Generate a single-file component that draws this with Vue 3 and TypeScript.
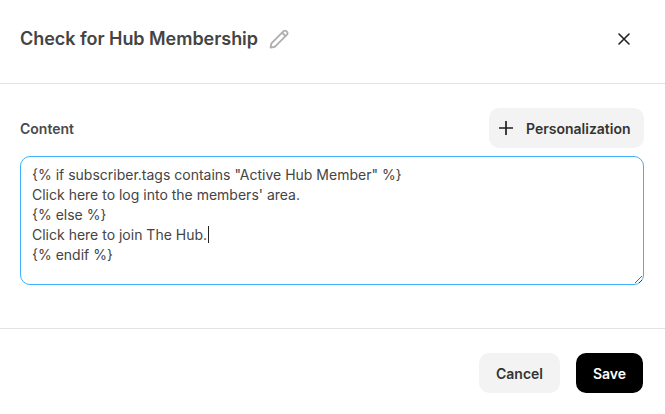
<script setup lang="ts">
const content = `{% if subscriber.tags contains "Active Hub Member" %}
Click here to log into the members' area.
{% else %}
Click here to join The Hub.
{% endif %}`
</script>

<template>
  <div class="modal">
    <header class="head">
      <div class="title-row">
        <h2 class="title">Check for Hub Membership</h2>
        <svg class="pencil" width="20" height="20" viewBox="0 0 20 20" fill="none" stroke="#b0b0b0" stroke-width="1.9" stroke-linejoin="round" stroke-linecap="round">
          <path d="M1.6 18.6 L2.4 14.4 L14.6 2.2 a1.9 1.9 0 0 1 2.7 0 l.7 .7 a1.9 1.9 0 0 1 0 2.7 L5.8 17.8 Z" />
          <path d="M13.2 3.8 L16.4 7" />
        </svg>
      </div>
      <button class="close" aria-label="Close">
        <svg width="12" height="12" viewBox="0 0 12 12" fill="none" stroke="#222" stroke-width="1.6" stroke-linecap="round">
          <path d="M1 1 L11 11 M11 1 L1 11" />
        </svg>
      </button>
    </header>
    <section class="body">
      <div class="label-row">
        <label class="label">Content</label>
        <button class="btn btn-plain personal">
          <svg width="14" height="14" viewBox="0 0 14 14" fill="none" stroke="#1f1f1f" stroke-width="1.7">
            <path d="M7 0 V14 M0 7 H14" />
          </svg>
          <span>Personalization</span>
        </button>
      </div>
      <div class="area-wrap">
        <textarea class="area" readonly :value="content"></textarea>
        <span class="caret"></span>
      </div>
    </section>
    <footer class="foot">
      <button class="btn btn-plain cancel">Cancel</button>
      <button class="btn save">Save</button>
    </footer>
  </div>
</template>

<style>
html, body { margin: 0; background: #fff; }
</style>

<style scoped>
.modal {
  width: 665px;
  height: 414px;
  box-sizing: border-box;
  font-family: Inter, "Liberation Sans", sans-serif;
  color: #444;
  background: #fff;
  overflow: hidden;
}
.head {
  height: 84px;
  box-sizing: border-box;
  border-bottom: 1px solid #e3e3e3;
  padding: 0 35px 6px 20px;
  display: flex;
  align-items: center;
  justify-content: space-between;
}
.title-row { display: flex; align-items: center; gap: 11px; }
.title { margin: 0; font-size: 18px; line-height: 24px; font-weight: 600; letter-spacing: -0.04px; color: #444; }
.pencil { display: block; }
.close { border: 0; background: none; padding: 0; display: flex; cursor: pointer; }
.body {
  height: 245px;
  box-sizing: border-box;
  padding: 24px 21px 0 20px;
  border-bottom: 1px solid #e3e3e3;
}
.label-row {
  display: flex;
  justify-content: space-between;
  align-items: center;
  margin-bottom: 8px;
}
.label { font-size: 14px; font-weight: 600; color: #4a4a4a; }
.btn {
  height: 40px;
  border: 0;
  border-radius: 10px;
  font-family: inherit;
  font-size: 14px;
  font-weight: 600;
  padding: 0;
  cursor: pointer;
}
.btn-plain { background: #f3f3f3; color: #333; }
.personal {
  width: 155px;
  display: flex;
  align-items: center;
  gap: 13px;
  padding-left: 10px;
  box-sizing: border-box;
}
.area-wrap { position: relative; height: 129px; }
.area {
  display: block;
  width: 100%;
  height: 129px;
  box-sizing: border-box;
  border: 1px solid #3fb0fb;
  border-radius: 10px;
  padding: 8px 11px;
  outline: none;
  font-family: inherit;
  font-size: 14px;
  line-height: 20px;
  color: #444;
  background: #fff;
  resize: vertical;
}
.caret {
  position: absolute;
  left: 188px;
  top: 70px;
  width: 1px;
  height: 17px;
  background: #222;
}
.foot {
  display: flex;
  justify-content: flex-end;
  gap: 16px;
  padding: 24px 22px 0 0;
}
.cancel { width: 81px; }
.save { width: 67px; background: #000; color: #fff; }
</style>
